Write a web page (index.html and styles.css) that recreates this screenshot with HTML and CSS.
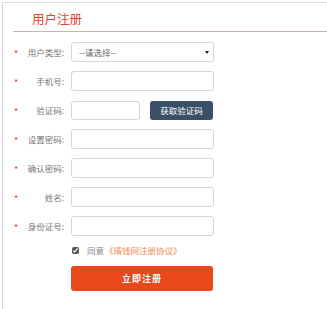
FILE: index.html
```html
<!DOCTYPE html>
<html>

<head>
    <title>用户注册</title>
    <link rel="stylesheet" href="styles.css">
</head>

<body>
    <div class="panel">
        <div class="panel-head">
            <h2>用户注册</h2>
        </div>

        <form class="reg-form">
            <div class="row">
                <span class="star">*</span>
                <label class="label">用户类型:</label>
                <div class="select-wrap">
                    <select class="field">
                        <option>--请选择--</option>
                    </select>
                    <span class="arrow"></span>
                </div>
            </div>

            <div class="row">
                <span class="star">*</span>
                <label class="label">手机号:</label>
                <input class="field" type="text">
            </div>

            <div class="row">
                <span class="star">*</span>
                <label class="label">验证码:</label>
                <input class="field field-short" type="text">
                <button type="button" class="btn-code">获取验证码</button>
            </div>

            <div class="row">
                <span class="star">*</span>
                <label class="label">设置密码:</label>
                <input class="field" type="password">
            </div>

            <div class="row">
                <span class="star">*</span>
                <label class="label">确认密码:</label>
                <input class="field" type="password">
            </div>

            <div class="row">
                <span class="star">*</span>
                <label class="label">姓名:</label>
                <input class="field" type="text">
            </div>

            <div class="row">
                <span class="star">*</span>
                <label class="label">身份证号:</label>
                <input class="field" type="text">
            </div>

            <div class="agree">
                <input type="checkbox" class="check" checked>
                <span>同意</span>
                <a href="#" class="protocol">《晴钱网注册协议》</a>
            </div>

            <button type="button" class="btn-submit">立即注册</button>
        </form>
    </div>
</body>

</html>
```

FILE: styles.css
```css
body {
    margin: 0;
    background: #fff;
    font-family: "Noto Sans CJK SC", "Noto Sans", sans-serif;
}

.panel {
    margin: 2px 0 0 2px;
    height: 307px;
    border-top: 1px solid #dcdcdc;
    border-left: 1px solid #d4d4d4;
}

.panel-head {
    margin-left: 10px;
    padding-left: 19px;
    height: 28px;
    display: flex;
    align-items: center;
    border-bottom: 1px solid #e6a89e;
}

.panel-head h2 {
    margin: 2px 0 0;
    font-size: 12.5px;
    font-weight: normal;
    color: #e4432b;
}

.reg-form {
    padding-top: 10px;
}

.row {
    display: flex;
    align-items: center;
    height: 20px;
    margin-bottom: 9px;
}

.star {
    width: 12px;
    padding-left: 11px;
    color: #e53935;
    font-size: 9px;
    line-height: 1;
    padding-top: 3px;
}

.label {
    width: 38px;
    margin-right: 7px;
    text-align: right;
    font-size: 8.5px;
    color: #777;
    white-space: nowrap;
}

.field {
    box-sizing: border-box;
    width: 143px;
    height: 20px;
    border: 1px solid #d6d6d6;
    border-radius: 3px;
    background: #fff;
    padding: 0 7px;
    font-family: inherit;
    font-size: 8.5px;
    color: #666;
    outline: none;
}

.field-short {
    width: 69px;
    height: 19px;
}

.select-wrap {
    position: relative;
    height: 20px;
}

.select-wrap select {
    display: block;
    appearance: none;
    -webkit-appearance: none;
}

.arrow {
    position: absolute;
    right: 5px;
    top: 9px;
    width: 0;
    height: 0;
    border-left: 2px solid transparent;
    border-right: 2px solid transparent;
    border-top: 3px solid #222;
}

.btn-code {
    box-sizing: border-box;
    width: 63px;
    height: 19px;
    margin-left: 10px;
    border: none;
    border-radius: 3px;
    background: #3b4f66;
    color: #fff;
    font-family: inherit;
    font-size: 8.5px;
    padding: 0;
}

.agree {
    display: flex;
    align-items: center;
    height: 10px;
    margin-left: 68px;
    font-size: 8.5px;
    color: #888;
}

.check {
    width: 7px;
    height: 7px;
    margin: 0 8px 0 1px;
    accent-color: #555;
}

.protocol {
    margin-left: 1px;
    color: #f08a4b;
    text-decoration: none;
}

.btn-submit {
    display: block;
    box-sizing: border-box;
    width: 142px;
    height: 25px;
    margin: 11px 0 0 68px;
    border: none;
    border-radius: 3px;
    background: #e8481c;
    color: #fff;
    font-family: inherit;
    font-size: 9px;
    font-weight: bold;
    letter-spacing: 1px;
}
```
